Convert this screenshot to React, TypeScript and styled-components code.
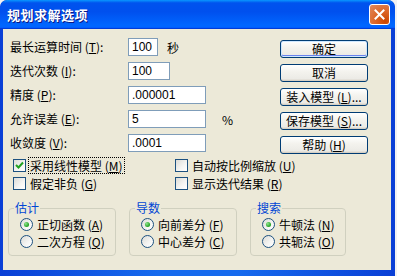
import React from 'react'
import { styled, createGlobalStyle } from 'styled-components'

const GlobalStyle = createGlobalStyle`
  html, body {
    margin: 0;
    padding: 0;
    background: #f2f2f2;
  }
  body {
    font-family: "Noto Sans CJK SC", "Liberation Sans", sans-serif;
    font-size: 12px;
  }
`

const Window = styled.div`
  width: 395px;
  height: 276px;
  box-sizing: border-box;
  background: #0a3fd6;
  border-radius: 7px 7px 0 0;
  display: flex;
  flex-direction: column;
  overflow: hidden;
`

const TitleBar = styled.div`
  height: 29px;
  flex: none;
  box-sizing: border-box;
  display: flex;
  align-items: center;
  justify-content: space-between;
  padding: 0 5px 1px 7px;
  background: linear-gradient(180deg, #0997ff 0%, #0053ee 10%, #0050ee 40%, #0066ff 86%, #0066ff 92%, #005bff 95%, #003dd7 97%, #003dd7 100%);
  border-radius: 7px 7px 0 0;
`

const Title = styled.span`
  color: #fff;
  font-weight: bold;
  font-size: 13px;
  letter-spacing: 0.5px;
  text-shadow: 1px 1px 0 #0a1883;
`

const CloseButton = styled.div`
  width: 21px;
  height: 21px;
  box-sizing: border-box;
  border: 1px solid #fff;
  border-radius: 3px;
  background: radial-gradient(circle at 80% 85%, #cc4600 0%, #dc6527 45%, #e08a5e 100%);
  display: flex;
  align-items: center;
  justify-content: center;
`

const Frame = styled.div`
  flex: 1;
  padding: 0 4px 6px 3px;
  background: linear-gradient(90deg, #0a3fd6, #166aee 40%, #166aee 60%, #0a3fd6);
  display: flex;
`

const Client = styled.div`
  flex: 1;
  background: #ece9d8;
  box-sizing: border-box;
  padding: 9px 0 0 5px;
  display: flex;
  flex-direction: column;
  color: #000;
`

const TopSection = styled.div`
  display: flex;
`

const Fields = styled.div`
  width: 270px;
  padding-left: 2px;
  display: flex;
  flex-direction: column;
  gap: 6px;
`

const FieldRow = styled.div`
  display: flex;
  align-items: center;
  height: 18px;
`

const Label = styled.span`
  width: 118px;
  white-space: nowrap;
  line-height: 18px;
`

const TextBox = styled.div<{ $w: number }>`
  width: ${(p) => p.$w}px;
  height: 18px;
  box-sizing: border-box;
  border: 1px solid #7f9db9;
  background: #fff;
  font-family: "Liberation Sans", sans-serif;
  font-size: 12px;
  line-height: 16px;
  padding-left: 3px;
`

const Suffix = styled.span<{ $gap: number }>`
  margin-left: ${(p) => p.$gap}px;
  font-size: 12px;
`

const Buttons = styled.div`
  margin-top: 2px;
  display: flex;
  flex-direction: column;
  gap: 6px;
`

const Button = styled.div<{ $default?: boolean }>`
  width: 88px;
  height: 18px;
  box-sizing: border-box;
  border: 1px solid #003c74;
  border-radius: 3px;
  background: linear-gradient(180deg, #ffffff 0%, #f4f3ee 40%, #ecebe6 85%, #d6d0c5 100%);
  box-shadow: ${(p) => (p.$default ? 'inset 0 0 0 1px #cee7ff, inset 0 -1px 0 1px #6982ee' : 'inset 0 -1px 0 #d6d0c5')};
  display: flex;
  align-items: center;
  justify-content: center;
  font-size: 12px;
  line-height: 16px;
  white-space: nowrap;
`

const Checks = styled.div`
  margin-top: 5px;
  padding-left: 5px;
  display: grid;
  grid-template-columns: 162px auto;
  row-gap: 5px;
`

const CheckItem = styled.div`
  display: flex;
  align-items: center;
  height: 13px;
  gap: 3px;
`

const CheckBox = styled.div`
  width: 13px;
  height: 13px;
  box-sizing: border-box;
  border: 1px solid #1c5180;
  background: linear-gradient(135deg, #dcdcd7 0%, #f5f5f3 60%, #ffffff 100%);
  display: flex;
  align-items: center;
  justify-content: center;
  flex: none;
`

const CheckText = styled.span<{ $focus?: boolean }>`
  line-height: 13px;
  padding: 1px 1px;
  outline: ${(p) => (p.$focus ? '1px dotted #000' : 'none')};
  white-space: nowrap;
`

const Groups = styled.div`
  margin-top: 11px;
  display: flex;
  gap: 13px;
`

const Group = styled.fieldset<{ $w: number }>`
  width: ${(p) => p.$w}px;
  box-sizing: border-box;
  margin: 0;
  padding: 0 0 7px 11px;
  border: 1px solid #d0d0bf;
  border-radius: 4px;
  display: flex;
  flex-direction: column;
  gap: 4px;
`

const Legend = styled.legend`
  color: #0046d5;
  font-size: 12px;
  line-height: 14px;
  padding: 0 1px;
  margin-left: -6px;
`

const RadioItem = styled.div`
  display: flex;
  align-items: center;
  height: 13px;
  gap: 4px;
  white-space: nowrap;
  &:first-of-type {
    margin-top: 3px;
  }
`

const Radio = styled.div<{ $on?: boolean }>`
  width: 13px;
  height: 13px;
  box-sizing: border-box;
  border-radius: 50%;
  border: 1px solid #1c5180;
  background: linear-gradient(135deg, #dcdcd7 0%, #f5f5f3 60%, #ffffff 100%);
  display: flex;
  align-items: center;
  justify-content: center;
  flex: none;
  &::after {
    content: '';
    display: ${(p) => (p.$on ? 'block' : 'none')};
    width: 5px;
    height: 5px;
    border-radius: 50%;
    background: radial-gradient(circle at 35% 35%, #8fe38f, #21a121 70%);
  }
`

const Key = styled.u`
  text-underline-offset: 1px;
`

const mk = (k: string) => (
  <>
    {' '}(<Key>{k}</Key>)
  </>
)

const Check = ({ on, focus, children }: { on?: boolean; focus?: boolean; children: React.ReactNode }) => (
  <CheckItem>
    <CheckBox>
      {on && (
        <svg width="9" height="9" viewBox="0 0 9 9">
          <path d="M1 4 L3.5 6.5 L8 1.5" fill="none" stroke="#21a121" strokeWidth="2" />
        </svg>
      )}
    </CheckBox>
    <CheckText $focus={focus}>{children}</CheckText>
  </CheckItem>
)

const Opt = ({ on, children }: { on?: boolean; children: React.ReactNode }) => (
  <RadioItem>
    <Radio $on={on} />
    <span>{children}</span>
  </RadioItem>
)

export default function App() {
  return (
    <>
      <GlobalStyle />
      <Window>
        <TitleBar>
          <Title>规划求解选项</Title>
          <CloseButton>
            <svg width="11" height="11" viewBox="0 0 11 11">
              <path d="M1.5 1.5 L9.5 9.5 M9.5 1.5 L1.5 9.5" stroke="#fff" strokeWidth="2" strokeLinecap="square" />
            </svg>
          </CloseButton>
        </TitleBar>
        <Frame>
          <Client>
            <TopSection>
              <Fields>
                <FieldRow>
                  <Label>最长运算时间{mk('T')}:</Label>
                  <TextBox $w={30}>100</TextBox>
                  <Suffix $gap={9}>秒</Suffix>
                </FieldRow>
                <FieldRow>
                  <Label>迭代次数{mk('I')}:</Label>
                  <TextBox $w={42}>100</TextBox>
                </FieldRow>
                <FieldRow>
                  <Label>精度{mk('P')}:</Label>
                  <TextBox $w={78}>.000001</TextBox>
                </FieldRow>
                <FieldRow>
                  <Label>允许误差{mk('E')}:</Label>
                  <TextBox $w={78}>5</TextBox>
                  <Suffix $gap={16}>%</Suffix>
                </FieldRow>
                <FieldRow>
                  <Label>收敛度{mk('V')}:</Label>
                  <TextBox $w={78}>.0001</TextBox>
                </FieldRow>
              </Fields>
              <Buttons>
                <Button $default>确定</Button>
                <Button>取消</Button>
                <Button>装入模型{mk('L')}...</Button>
                <Button>保存模型{mk('S')}...</Button>
                <Button>帮助{mk('H')}</Button>
              </Buttons>
            </TopSection>
            <Checks>
              <Check on focus>采用线性模型{mk('M')}</Check>
              <Check>自动按比例缩放{mk('U')}</Check>
              <Check>假定非负{mk('G')}</Check>
              <Check>显示迭代结果{mk('R')}</Check>
            </Checks>
            <Groups>
              <Group $w={108}>
                <Legend>估计</Legend>
                <Opt on>正切函数{mk('A')}</Opt>
                <Opt>二次方程{mk('Q')}</Opt>
              </Group>
              <Group $w={108}>
                <Legend>导数</Legend>
                <Opt on>向前差分{mk('F')}</Opt>
                <Opt>中心差分{mk('C')}</Opt>
              </Group>
              <Group $w={96}>
                <Legend>搜索</Legend>
                <Opt on>牛顿法{mk('N')}</Opt>
                <Opt>共轭法{mk('O')}</Opt>
              </Group>
            </Groups>
          </Client>
        </Frame>
      </Window>
    </>
  )
}
